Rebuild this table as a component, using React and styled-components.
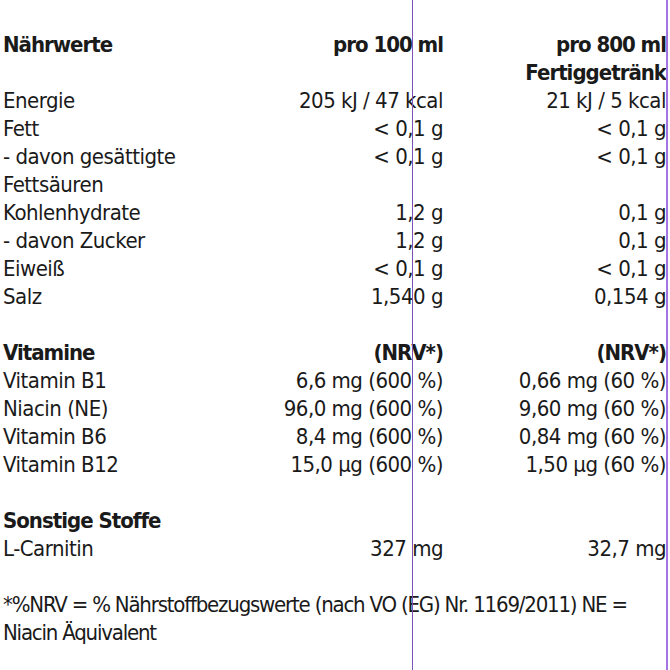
import React from 'react';
import styled, { createGlobalStyle } from 'styled-components';

const GlobalStyle = createGlobalStyle`
  html, body {
    margin: 0;
    padding: 0;
    background: #fff;
  }
  body {
    font-family: "Liberation Sans Narrow", "Arial Narrow", "DejaVu Sans Condensed", "Liberation Sans", sans-serif;
    color: #1a1a1a;
  }
`;

const Page = styled.div`
  position: relative;
  width: 670px;
  height: 670px;
  overflow: hidden;
  padding: 31px 4px 0 3px;
  box-sizing: border-box;
  font-size: 22px;
  line-height: 28px;
  letter-spacing: -0.5px;
`;

const Table = styled.div`
  display: grid;
  grid-template-columns: 1fr 220px 223px;
`;

const Cell = styled.div`
  text-align: ${p => (p.$num ? 'right' : 'left')};
  font-weight: ${p => (p.$bold ? 700 : 400)};
  letter-spacing: ${p => (p.$bold ? '-1px' : 'inherit')};
  white-space: nowrap;
`;

const Spacer = styled.div`
  grid-column: 1 / -1;
  height: 28px;
`;

const Note = styled.p`
  margin: 28px 0 0;
  white-space: nowrap;
  letter-spacing: -1.2px;
`;

const Guide = styled.div`
  position: absolute;
  top: 0;
  bottom: 0;
  left: ${p => p.$x}px;
  width: ${p => p.$w || 1}px;
  background: ${p => p.$color};
`;

const nutrients = [
  ['Energie', '205 kJ / 47 kcal', '21 kJ / 5 kcal'],
  ['Fett', '< 0,1 g', '< 0,1 g'],
  [['- davon gesättigte', 'Fettsäuren'], '< 0,1 g', '< 0,1 g'],
  ['Kohlenhydrate', '1,2 g', '0,1 g'],
  ['- davon Zucker', '1,2 g', '0,1 g'],
  ['Eiweiß', '< 0,1 g', '< 0,1 g'],
  ['Salz', '1,540 g', '0,154 g'],
];

const vitamins = [
  ['Vitamin B1', '6,6 mg (600 %)', '0,66 mg (60 %)'],
  ['Niacin (NE)', '96,0 mg (600 %)', '9,60 mg (60 %)'],
  ['Vitamin B6', '8,4 mg (600 %)', '0,84 mg (60 %)'],
  ['Vitamin B12', '15,0 µg (600 %)', '1,50 µg (60 %)'],
];

const Row = ({ label, a, b, bold }) => (
  <>
    <Cell $bold={bold}>
      {Array.isArray(label) ? label.map((l, i) => <div key={i}>{l}</div>) : label}
    </Cell>
    <Cell $num $bold={bold}>{a}</Cell>
    <Cell $num $bold={bold}>{b}</Cell>
  </>
);

export default function App() {
  return (
    <>
      <GlobalStyle />
      <Page>
        <Table>
          <Row bold label="Nährwerte" a="pro 100 ml" b={<><div>pro 800 ml</div><div>Fertiggetränk</div></>} />
          {nutrients.map(([l, a, b], i) => <Row key={i} label={l} a={a} b={b} />)}
          <Spacer />
          <Row bold label="Vitamine" a="(NRV*)" b="(NRV*)" />
          {vitamins.map(([l, a, b], i) => <Row key={i} label={l} a={a} b={b} />)}
          <Spacer />
          <Row bold label="Sonstige Stoffe" a="" b="" />
          <Row label="L-Carnitin" a="327 mg" b="32,7 mg" />
        </Table>
        <Note>
          *%NRV = % Nährstoffbezugswerte (nach VO (EG) Nr. 1169/2011) NE =
          <br />
          Niacin Äquivalent
        </Note>
        <Guide $x={412} $color="#7d52b8" />
        <Guide $x={666} $w={2} $color="#a474e4" />
      </Page>
    </>
  );
}
